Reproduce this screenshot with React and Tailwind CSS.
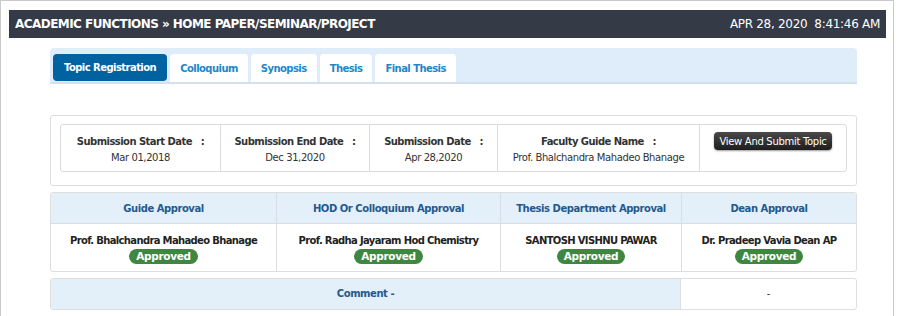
import React from 'react';

const tabs = ['Topic Registration', 'Colloquium', 'Synopsis', 'Thesis', 'Final Thesis'];

const dates = [
  { label: 'Submission Start Date', value: 'Mar 01,2018', w: 'w-[160px]' },
  { label: 'Submission End Date', value: 'Dec 31,2020', w: 'w-[149px]' },
  { label: 'Submission Date', value: 'Apr 28,2020', w: 'w-[128px]' },
  { label: 'Faculty Guide Name', value: 'Prof. Bhalchandra Mahadeo Bhanage', w: 'w-[202px]' },
];

const approvals = [
  { title: 'Guide Approval', name: 'Prof. Bhalchandra Mahadeo Bhanage', w: 'w-[226px]' },
  { title: 'HOD Or Colloquium Approval', name: 'Prof. Radha Jayaram Hod Chemistry', w: 'w-[224px]' },
  { title: 'Thesis Department Approval', name: 'SANTOSH VISHNU PAWAR', w: 'w-[181px]' },
  { title: 'Dean Approval', name: 'Dr. Pradeep Vavia Dean AP', w: 'flex-1' },
];

export default function App() {
  return (
    <div className="w-[894px] h-[330px] border border-[#c9c9c9] bg-white text-[#333] font-['DejaVu_Sans',sans-serif]">
      {/* top bar */}
      <div className="ml-[8px] mt-[9px] w-[877px] h-[28px] bg-[#343a46] text-white flex items-center justify-between px-[6px]">
        <span className="font-bold text-[12px] tracking-[-0.55px]">ACADEMIC FUNCTIONS » HOME PAPER/SEMINAR/PROJECT</span>
        <span className="text-[12px] tracking-[-0.3px] whitespace-pre">APR 28, 2020  8:41:46 AM</span>
      </div>

      <div className="ml-[49px] w-[807px]">
        {/* tabs */}
        <div className="mt-[10px] h-[36px] bg-[#deedf9] rounded-t-[4px] border-b-2 border-[#d3e1ec] flex items-end gap-[3px] pl-[3px]">
          {tabs.map((t, i) => (
            <div
              key={t}
              className={
                i === 0
                  ? 'h-[27px] mb-[1px] px-[11px] flex items-center rounded-[4px] bg-[#0062a1] text-white text-[10px] font-bold tracking-[-0.55px]'
                  : 'h-[28px] px-[10px] flex items-center rounded-t-[4px] bg-white text-[#1c87c9] text-[10px] font-bold tracking-[-0.55px]'
              }
            >
              {t}
            </div>
          ))}
        </div>

        {/* dates card */}
        <div className="mt-[31px] border border-[#dedede] rounded-[3px] px-[9px] pt-[8px] pb-[13px]">
          <div className="border border-[#dcdcdc] rounded-[3px] flex h-[48px]">
            {dates.map((d) => (
              <div key={d.label} className={`${d.w} border-r border-[#dcdcdc] flex flex-col items-center pt-[9px] text-[10px]`}>
                <span className="font-bold whitespace-pre tracking-[-0.55px]">{d.label + '   :'}</span>
                <span className="mt-[1px] tracking-[-0.4px]">{d.value}</span>
              </div>
            ))}
            <div className="flex-1 flex justify-center pt-[7px]">
              <button className="h-[18px] px-[5px] rounded-[4px] bg-gradient-to-b from-[#4a4a4a] to-[#1e1e1e] text-white text-[10px] tracking-[-0.3px] shadow-[0_1px_2px_rgba(0,0,0,0.4)]">
                View And Submit Topic
              </button>
            </div>
          </div>
        </div>

        {/* approvals */}
        <div className="mt-[6px] border border-[#dedede] rounded-[3px] overflow-hidden">
          <div className="flex h-[31px] bg-[#e3eff9] border-b border-[#d7dde2]">
            {approvals.map((a, i) => (
              <div key={a.title} className={`${a.w} ${i < 3 ? 'border-r border-[#d7dde2]' : ''} flex items-center justify-center text-[10px] font-bold text-[#235a8f] tracking-[-0.45px]`}>
                {a.title}
              </div>
            ))}
          </div>
          <div className="flex h-[47px]">
            {approvals.map((a, i) => (
              <div key={a.title} className={`${a.w} ${i < 3 ? 'border-r border-[#dedede]' : ''} flex flex-col items-center pt-[9px] text-[10px]`}>
                <span className="font-bold text-[#222] tracking-[-0.65px]">{a.name}</span>
                <span className="mt-[1px] px-[7px] h-[15px] leading-[15px] rounded-full bg-[#3f8741] text-white font-bold text-[10.5px] tracking-[-0.3px]">Approved</span>
              </div>
            ))}
          </div>
        </div>

        {/* comment */}
        <div className="mt-[6px] border border-[#dedede] rounded-[3px] overflow-hidden flex h-[32px]">
          <div className="w-[630px] bg-[#e3eff9] border-r border-[#dedede] flex items-center justify-center pb-[2px] text-[10px] font-bold text-[#235a8f] tracking-[-0.45px]">
            Comment -
          </div>
          <div className="flex-1 flex items-center justify-center text-[10px] pb-[2px]">-</div>
        </div>
      </div>
    </div>
  );
}
